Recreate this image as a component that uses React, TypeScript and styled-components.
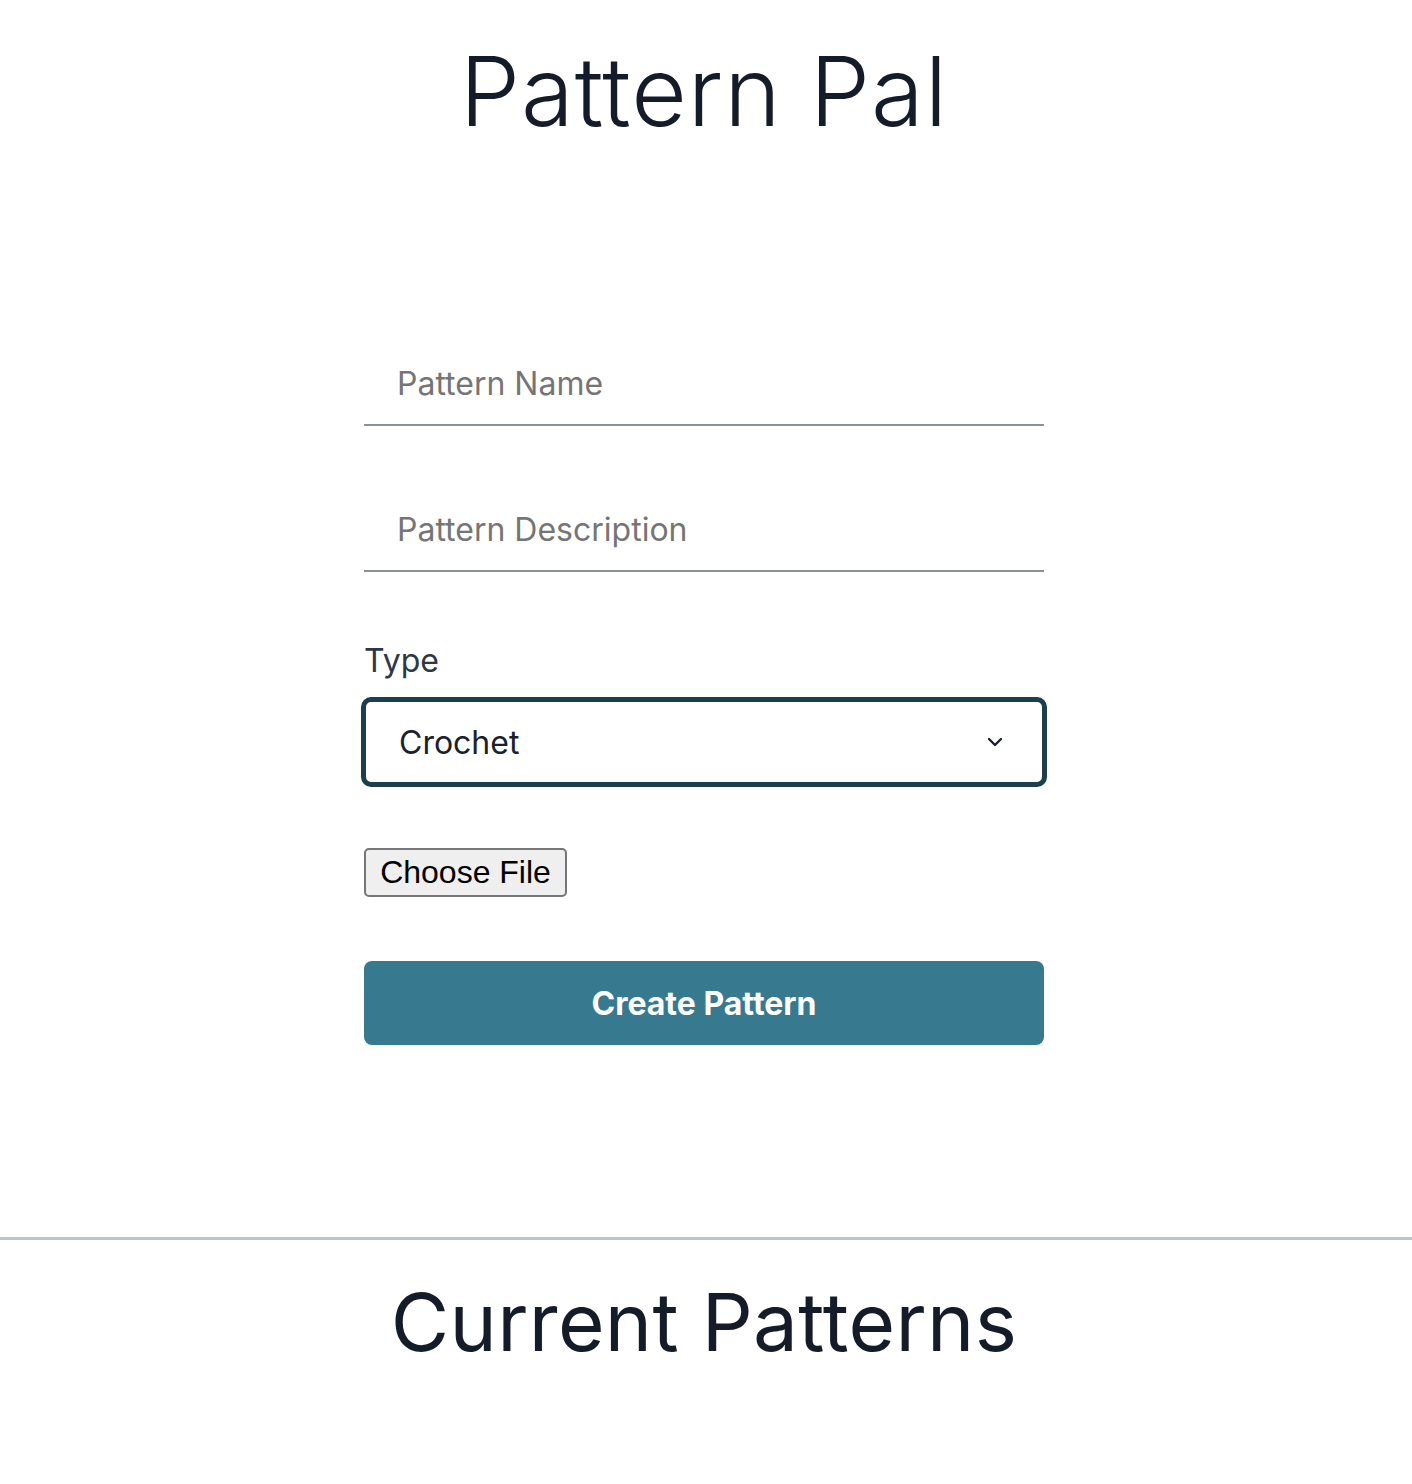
import styled, { createGlobalStyle } from 'styled-components'

const GlobalStyle = createGlobalStyle`
  * {
    box-sizing: border-box;
  }

  body {
    margin: 0;
    background: #ffffff;
    font-family: Inter, "Noto Sans", sans-serif;
    color: #1a202c;
  }
`

export default function App() {
  return (
    <>
      <GlobalStyle />
      <Page>
        <Title>Pattern Pal</Title>

        <Form onSubmit={(e) => e.preventDefault()}>
          <FlushedInput placeholder="Pattern Name" />
          <FlushedInput placeholder="Pattern Description" />

          <Field>
            <Label htmlFor="type">Type</Label>
            <SelectWrap>
              <Select id="type" defaultValue="crochet">
                <option value="crochet">Crochet</option>
                <option value="knitting">Knitting</option>
              </Select>
              <Chevron viewBox="0 0 16 10" aria-hidden>
                <path d="M2 2l6 6 6-6" />
              </Chevron>
            </SelectWrap>
          </Field>

          <FileButton type="button">Choose File</FileButton>

          <SubmitButton type="submit">Create Pattern</SubmitButton>
        </Form>

        <Divider />

        <SectionTitle>Current Patterns</SectionTitle>
      </Page>
    </>
  )
}

const Page = styled.div`
  display: flex;
  flex-direction: column;
  align-items: center;
  min-height: 1484px;
  padding: 34px 4px 0 0;
`

const Title = styled.h1`
  margin: 0;
  font-size: 96px;
  font-weight: 300;
  line-height: 1.2;
  color: #141b29;
  letter-spacing: 1px;
`

const Form = styled.form`
  width: 680px;
  display: flex;
  flex-direction: column;
  margin-top: 205px;
`

const FlushedInput = styled.input`
  height: 72px;
  width: 100%;
  border: none;
  border-bottom: 2px solid #8a919b;
  padding: 0 33px 12px;
  margin-bottom: 74px;
  font-family: Inter, sans-serif;
  font-size: 32px;
  color: #1a202c;
  outline: none;
  background: transparent;

  &::placeholder {
    color: #757575;
  }
`

const Field = styled.div`
  display: flex;
  flex-direction: column;
  margin-top: -9px;
`

const Label = styled.label`
  font-size: 32px;
  line-height: 48px;
  color: #2d3748;
  margin-bottom: 12px;
`

const SelectWrap = styled.div`
  position: relative;
  margin: 0 -3px;
`

const Select = styled.select`
  appearance: none;
  width: 100%;
  height: 90px;
  border: 5px solid #1d3f4b;
  border-radius: 10px;
  padding: 0 33px;
  font-family: Inter, sans-serif;
  font-size: 32px;
  color: #1a202c;
  background: #ffffff;
  outline: none;
`

const Chevron = styled.svg`
  position: absolute;
  right: 44px;
  top: 40px;
  width: 16px;
  height: 10px;
  fill: none;
  stroke: #1a202c;
  stroke-width: 2.4;
  stroke-linecap: round;
  stroke-linejoin: round;
  pointer-events: none;
`

const FileButton = styled.button`
  align-self: flex-start;
  margin-top: 61px;
  height: 49px;
  width: 203px;
  padding: 0;
  border: 2px solid #767676;
  border-radius: 5px;
  background: #efefef;
  font-family: "Liberation Sans", Arial, sans-serif;
  font-size: 32px;
  color: #000000;
`

const SubmitButton = styled.button`
  margin-top: 64px;
  height: 84px;
  width: 100%;
  border: none;
  border-radius: 8px;
  background: #377a8f;
  color: #ffffff;
  font-family: Inter, sans-serif;
  font-size: 32px;
  font-weight: 700;
`

const Divider = styled.hr`
  align-self: stretch;
  margin: 192px -4px 0 0;
  border: none;
  border-top: 3px solid #bcc4cc;
`

const SectionTitle = styled.h2`
  margin: 34px 0 0;
  font-size: 80px;
  font-weight: 400;
  line-height: 1.2;
  color: #141b29;
  letter-spacing: 0.3px;
`
